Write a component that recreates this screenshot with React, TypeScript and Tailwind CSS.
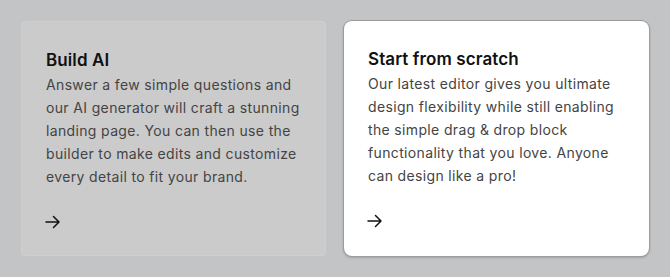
import React from 'react';

interface Option {
  title: string;
  body: string;
  active?: boolean;
}

const options: Option[] = [
  {
    title: 'Build AI',
    body: 'Answer a few simple questions and our AI generator will craft a stunning landing page. You can then use the builder to make edits and customize every detail to fit your brand.',
  },
  {
    title: 'Start from scratch',
    body: 'Our latest editor gives you ultimate design flexibility while still enabling the simple drag & drop block functionality that you love. Anyone can design like a pro!',
    active: true,
  },
];

function Arrow() {
  return (
    <svg width="16" height="16" viewBox="0 0 16 16" fill="none" stroke="#111" strokeWidth="1.5" strokeLinecap="round" strokeLinejoin="round">
      <path d="M1 8h13M8.5 2.5L14 8l-5.5 5.5" />
    </svg>
  );
}

export default function App() {
  return (
    <div
      className="w-[670px] h-[277px] bg-[#c3c4c6] flex gap-[18px] pl-[21px] pt-[21px]"
      style={{ fontFamily: 'Inter, "Noto Sans", sans-serif' }}
    >
      {options.map((o) => (
        <div
          key={o.title}
          className={`w-[305px] h-[235px] flex flex-col px-6 pt-[26px] ${
            o.active
              ? 'bg-white rounded-lg shadow-[0_0_0_1px_#9c9c9c,0_1px_3px_rgba(0,0,0,0.35)]'
              : 'bg-[#cbcbcb] rounded border border-[#cfcfcf]'
          }`}
        >
          <h2 className="text-[17px] leading-6 font-semibold text-[#111] tracking-[0.1px]">{o.title}</h2>
          <p className="text-[14px] leading-[23px] text-[#444] tracking-[0.35px] mt-[1px]">{o.body}</p>
          <div className="mt-[26px] -ml-[1px]">
            <Arrow />
          </div>
        </div>
      ))}
    </div>
  );
}
